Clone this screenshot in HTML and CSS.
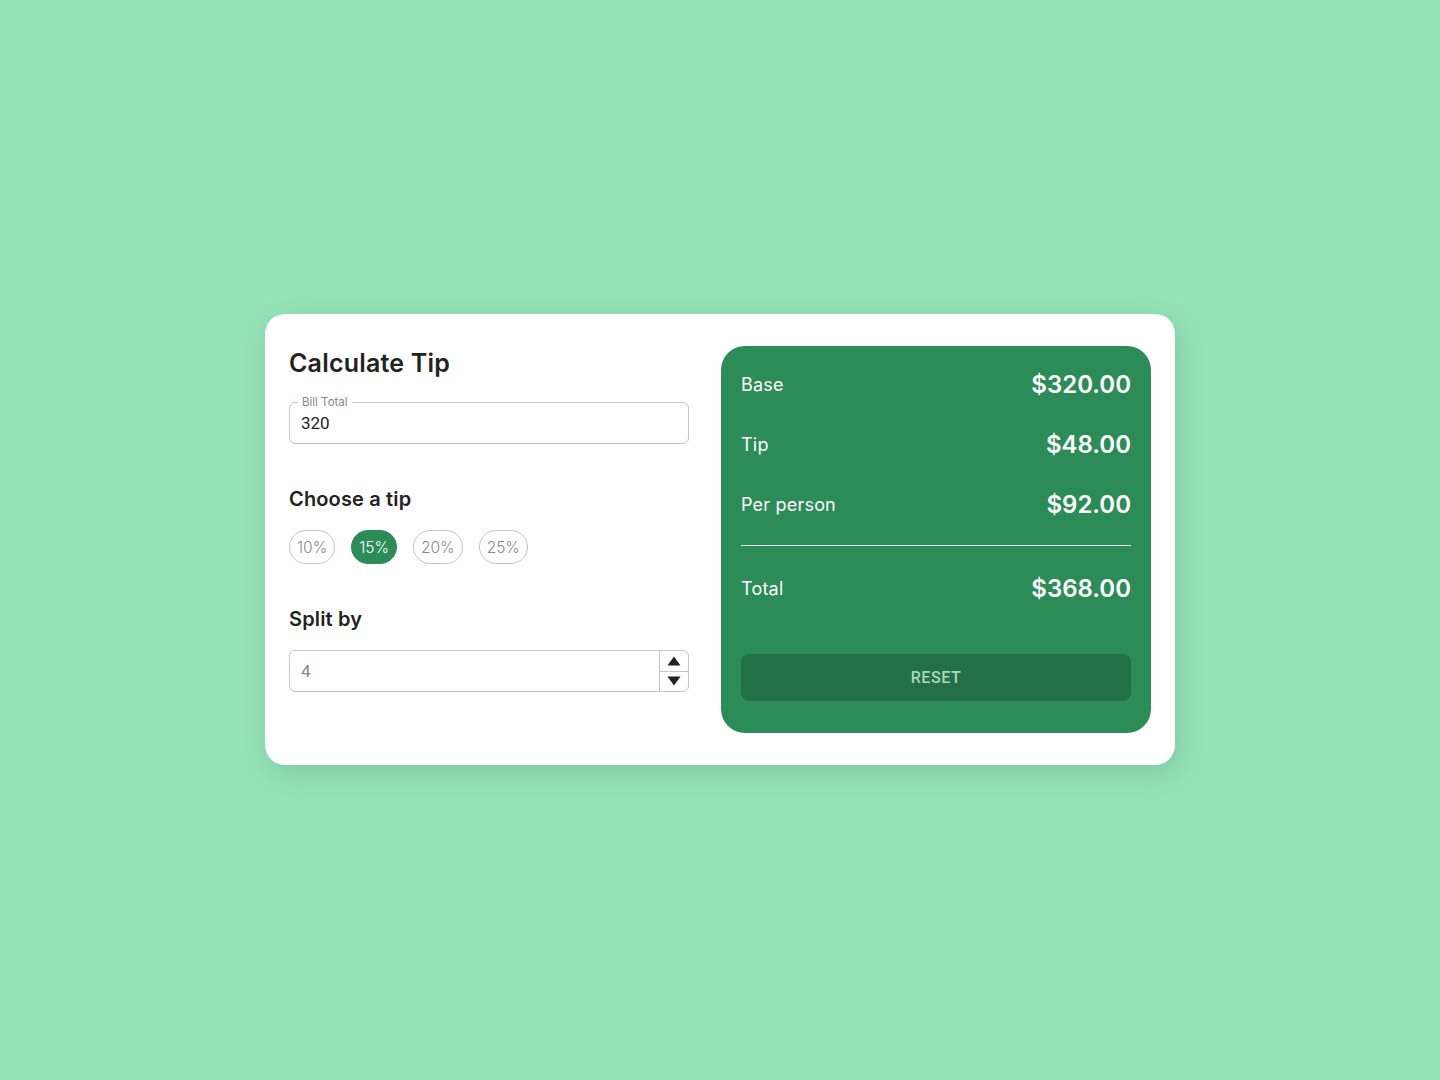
FILE: index.html
```html
<!DOCTYPE html>
<html lang="en">
<head>
<meta charset="utf-8">
<title>Calculate Tip</title>
<link rel="stylesheet" href="styles.css">
</head>
<body>
<main class="card">
  <section class="form">
    <h1 class="title">Calculate Tip</h1>
    <div class="field">
      <span class="field-label">Bill Total</span>
      <span class="field-value">320</span>
    </div>
    <h2 class="subtitle">Choose a tip</h2>
    <div class="chips">
      <span class="chip">10%</span>
      <span class="chip chip-active">15%</span>
      <span class="chip">20%</span>
      <span class="chip">25%</span>
    </div>
    <h2 class="subtitle">Split by</h2>
    <div class="number">
      <span class="number-value">4</span>
      <div class="spin">
        <span class="spin-btn"><svg width="14" height="10" viewBox="0 0 14 10"><path d="M7 0.5 L13.5 9.5 L0.5 9.5 Z" fill="#222"/></svg></span>
        <span class="spin-btn spin-down"><svg width="14" height="10" viewBox="0 0 14 10"><path d="M0.5 0.5 L13.5 0.5 L7 9.5 Z" fill="#222"/></svg></span>
      </div>
    </div>
  </section>
  <section class="summary">
    <div class="row"><span class="label">Base</span><span class="amount">$320.00</span></div>
    <div class="row"><span class="label">Tip</span><span class="amount">$48.00</span></div>
    <div class="row"><span class="label">Per person</span><span class="amount">$92.00</span></div>
    <hr class="divider">
    <div class="row row-total"><span class="label">Total</span><span class="amount">$368.00</span></div>
    <button class="reset" type="button">RESET</button>
  </section>
</main>
</body>
</html>
```
FILE: styles.css
```css
* { box-sizing: border-box; }
html, body { margin: 0; padding: 0; }
body {
  background: #96e3b9;
  min-height: 100vh;
  display: flex;
  align-items: center;
  justify-content: center;
  font-family: "Inter", "Noto Sans", sans-serif;
  color: #222;
}
.card {
  background: #fff;
  border-radius: 20px;
  box-shadow: 4px 8px 28px rgba(20, 80, 50, 0.18);
  padding: 32px 24px;
  margin-bottom: 1px;
  display: grid;
  grid-template-columns: 400px 430px;
  column-gap: 32px;
  align-items: start;
}
.form { display: flex; flex-direction: column; }
.title {
  margin: 0;
  font-size: 25px;
  line-height: 34px;
  font-weight: 600;
  color: #222;
  letter-spacing: 0.2px;
}
.field {
  position: relative;
  margin-top: 22px;
  height: 42px;
  border: 1px solid #c6c6c6;
  border-radius: 6px;
  display: flex;
  align-items: center;
  padding: 0 11px;
}
.field-label {
  position: absolute;
  top: -8px;
  left: 8px;
  padding: 0 4px;
  background: #fff;
  font-size: 11.5px;
  line-height: 14px;
  color: #888;
}
.field-value {
  font-family: "Roboto", "Liberation Sans", sans-serif;
  font-size: 17px;
  color: #222;
}
.subtitle {
  margin: 40px 0 0;
  font-size: 20px;
  line-height: 30px;
  font-weight: 600;
  color: #222;
  letter-spacing: 0.15px;
}
.chips {
  margin-top: 16px;
  display: flex;
  gap: 16px;
}
.chip {
  height: 34px;
  padding: 0 7px;
  border: 1px solid #c6c6c6;
  border-radius: 17px;
  display: flex;
  align-items: center;
  font-size: 15.5px;
  font-weight: 300;
  color: #888;
}
.chip-active {
  background: #2b8c58;
  border-color: #2b8c58;
  color: #fff;
}
.number {
  margin-top: 16px;
  height: 42px;
  border: 1px solid #c6c6c6;
  border-radius: 6px;
  display: flex;
  align-items: stretch;
}
.number-value {
  flex: 1;
  display: flex;
  align-items: center;
  padding: 0 11px;
  font-family: "Roboto", "Liberation Sans", sans-serif;
  font-size: 17px;
  color: #888;
}
.spin {
  width: 29px;
  border-left: 1px solid #c6c6c6;
  display: flex;
  flex-direction: column;
}
.spin-btn {
  flex: 1;
  display: flex;
  align-items: center;
  justify-content: center;
}
.spin-btn svg { display: block; }
.spin-down { border-top: 1px solid #c6c6c6; }
.summary {
  background: #2b8c58;
  border-radius: 24px;
  padding: 20px 20px 32px;
  display: flex;
  flex-direction: column;
  gap: 24px;
  color: #fff;
}
.row {
  height: 36px;
  display: flex;
  align-items: center;
  justify-content: space-between;
}
.label {
  font-size: 18px;
  font-weight: 400;
  letter-spacing: 0.2px;
}
.amount {
  font-size: 24px;
  font-weight: 600;
  letter-spacing: 0;
}
.divider {
  margin: -1px 0 0;
  border: 0;
  height: 1px;
  background: #e6f4ec;
}
.reset {
  margin-top: 24px;
  height: 47px;
  border: 0;
  border-radius: 8px;
  background: #237048;
  color: #a9d9bb;
  font-family: "Roboto", "Liberation Sans", sans-serif;
  font-size: 16px;
  font-weight: 500;
  letter-spacing: 0.6px;
}
```
